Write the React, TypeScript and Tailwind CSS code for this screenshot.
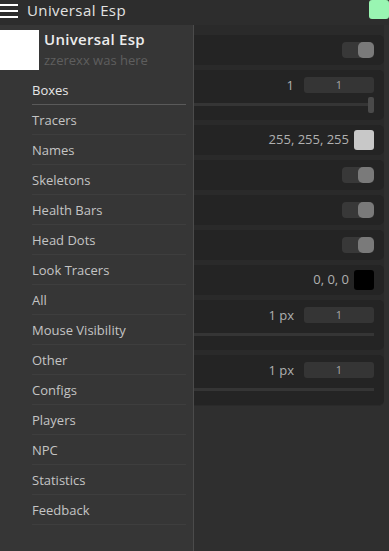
import React from "react";

const font = { fontFamily: '"Open Sans", "Liberation Sans", sans-serif' };

const menu = [
  "Boxes",
  "Tracers",
  "Names",
  "Skeletons",
  "Health Bars",
  "Head Dots",
  "Look Tracers",
  "All",
  "Mouse Visibility",
  "Other",
  "Configs",
  "Players",
  "NPC",
  "Statistics",
  "Feedback",
];

const Toggle = () => (
  <div className="w-8 h-4 rounded-[4px] bg-[#383838] flex justify-end">
    <div className="w-4 h-4 rounded-[5px] bg-[#7a7a7a]" />
  </div>
);

const NumBox = ({ v }: { v: string }) => (
  <div className="w-[70px] h-4 rounded-[3px] bg-[#353535] text-[11px] leading-4 text-center text-[#a8a8a8]">
    {v}
  </div>
);

const Card = ({ children }: { children: React.ReactNode }) => (
  <div className="bg-[#242424] rounded-[5px] h-[30px] px-[10px]">{children}</div>
);

const Row = ({ children }: { children: React.ReactNode }) => (
  <div className="h-[30px] flex items-center justify-end gap-[5px] text-[13px] text-[#b0b0b0]">
    {children}
  </div>
);

// slider card: value label + number box on top, track below
const SliderCard = ({ label, thumb }: { label: string; thumb?: boolean }) => (
  <div className="bg-[#242424] rounded-[5px] h-[50px] px-[10px]">
    <div className="h-[37px] pt-[7px] flex items-start justify-end gap-[10px] text-[13px] text-[#b0b0b0]">
      <span className="leading-4">{label}</span>
      <NumBox v="1" />
    </div>
    <div className={`relative h-[3px] bg-[#353535] -mt-[4px] ${thumb ? "mr-[6px]" : ""}`}>
      {thumb && (
        <div className="absolute right-[-6px] -top-[6px] w-[6px] h-4 rounded-[2px] bg-[#4a4a4a]" />
      )}
    </div>
  </div>
);

export default function App() {
  return (
    <div className="relative w-[389px] h-[551px] bg-[#2f2f2f] overflow-hidden" style={font}>
      {/* top bar */}
      <div className="h-[25px] bg-[#2d2d2d] flex items-center">
        <div className="w-[18px] flex flex-col gap-[4px] -mt-[4px]">
          <div className="h-[2px] bg-white" />
          <div className="h-[2px] bg-white" />
          <div className="h-[2px] bg-white" />
        </div>
        <span className="ml-[9px] text-[15px] tracking-[0.4px] text-[#e2e2e2] -mt-[4px]">Universal Esp</span>
        <div className="ml-auto self-start w-5 h-[19px] rounded-[3px] bg-[#99f5b2]" />
      </div>

      {/* content */}
      <div className="w-[384px] bg-[#2a2a2a] rounded-b-[5px] pt-[10px] pb-[1px] flex flex-col gap-[5px]">
        <Card>
          <Row>
            <Toggle />
          </Row>
        </Card>
        <SliderCard label="1" thumb />
        <Card>
          <Row>
            <span>255, 255, 255</span>
            <div className="w-5 h-5 rounded-[3px] bg-[#c8c8c8]" />
          </Row>
        </Card>
        <Card>
          <Row>
            <Toggle />
          </Row>
        </Card>
        <Card>
          <Row>
            <Toggle />
          </Row>
        </Card>
        <Card>
          <Row>
            <Toggle />
          </Row>
        </Card>
        <Card>
          <Row>
            <span>0, 0, 0</span>
            <div className="w-5 h-5 rounded-[3px] bg-black" />
          </Row>
        </Card>
        <SliderCard label="1 px" />
        <SliderCard label="1 px" />
      </div>

      {/* sidebar drawer */}
      <div className="absolute left-0 top-[25px] bottom-0 w-[194px] bg-[#363636] border-r border-[#4b4b4b]">
        <div className="h-[50px] flex items-center">
          <div className="w-[39px] h-10 bg-white" />
          <div className="ml-[5px] flex flex-col">
            <span className="text-[15px] font-semibold tracking-[0.3px] text-[#ececec] leading-5 -mt-[1px]">
              Universal Esp
            </span>
            <span className="text-[13px] text-[#5e5e5e] leading-5 mt-[1px]">zzerexx was here</span>
          </div>
        </div>
        <div className="ml-[32px] mr-[7px] flex flex-col">
          {menu.map((m, i) => (
            <div
              key={m}
              className={`h-[30px] pt-[2px] flex items-center text-[13px] border-b ${
                i === 0 ? "text-[#e6e6e6] border-[#5a5a5a]" : "text-[#c4c4c4] border-[#3e3e3e]"
              }`}
            >
              {m}
            </div>
          ))}
        </div>
      </div>
    </div>
  );
}
